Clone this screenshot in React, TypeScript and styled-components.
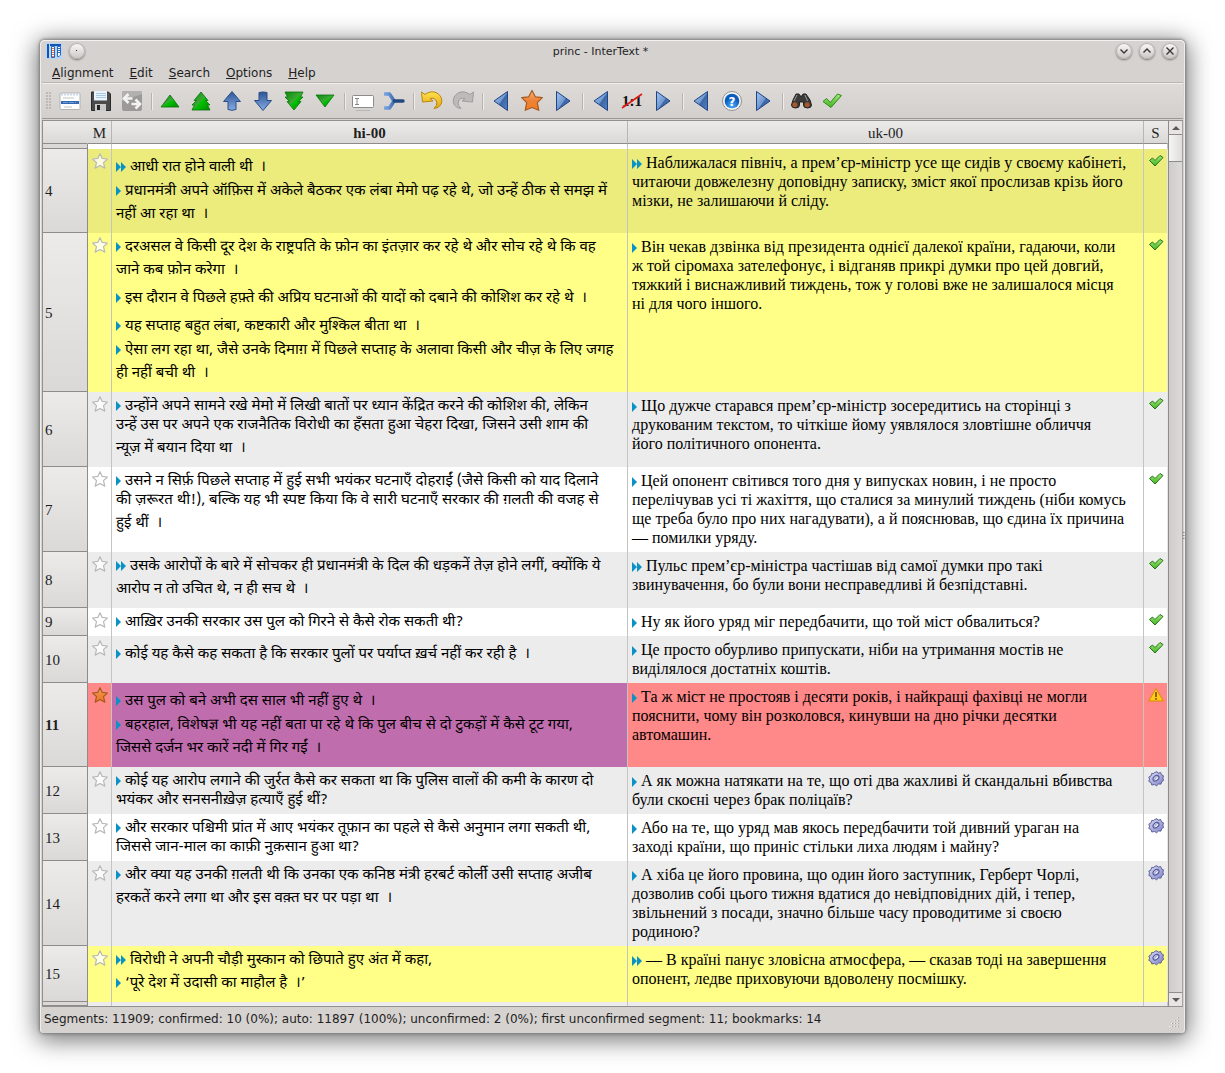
import React from "react";
import styled, { createGlobalStyle } from "styled-components";

const UI = `"DejaVu Sans", sans-serif`;
const SERIF = `"Liberation Serif", "Noto Serif", serif`;
const HINDI = `"Noto Sans Devanagari", "Lohit Devanagari", "Noto Sans", sans-serif`;

const GlobalStyle = createGlobalStyle`
  * { box-sizing: border-box; }
  body { margin: 0; background: #fff; color: #221e1e; font-family: ${UI}; }
  button { font: inherit; color: inherit; border: 0; background: none; padding: 0; margin: 0; }
`;

const Desktop = styled.div`
  padding: 40px;
`;

const Window = styled.main`
  position: relative;
  display: flex;
  flex-direction: column;
  padding: 0 2px;
  border-radius: 5px 5px 4px 4px;
  background: #d6d2d0;
  box-shadow: inset 0 1px 0 #f4f2f1, inset 1px 0 0 #efedec, inset -1px 0 0 #efedec, 0 0 3px 1px #7c7c7c,
    0 4px 24px 3px rgba(0, 0, 0, 0.55);
`;

const TitleBar = styled.header`
  display: flex;
  align-items: center;
  height: 22px;
  padding: 0 5px 0 4px;
`;

const TitleGroup = styled.div`
  display: flex;
  align-items: center;
  gap: 7px;
`;

const Title = styled.h1`
  flex: 1;
  margin: 0;
  text-align: center;
  font-size: 11px;
  font-weight: 400;
`;

const RoundButton = styled.button`
  display: grid;
  place-items: center;
  width: 16px;
  height: 16px;
  border-radius: 50%;
  background: linear-gradient(#fbfafa, #c9c6c3);
  box-shadow: inset 0 0 0 1px #b4b1ae, 0 1px 2px #77736f;
`;

const MenuBar = styled.nav`
  display: flex;
  height: 21px;
  padding: 1px 2px 0;
  font-size: 12px;
  border-bottom: 1px solid #b9b5b2;
`;

const MenuItem = styled.button`
  padding: 0 8px;
`;

const ToolBar = styled.div`
  display: flex;
  align-items: center;
  height: 36px;
  padding: 0 4px;
  border-top: 1px solid #f1efee;
  border-bottom: 1px solid #9b9896;
  background: linear-gradient(#dedad8, #d3cfcd);
`;

const Handle = styled.div`
  width: 6px;
  height: 18px;
  margin-right: 2px;
  background-image: radial-gradient(circle at 1px 1px, #bdb9b6 1px, transparent 1px);
  background-size: 3px 3px;
`;

const ToolButton = styled.button`
  display: grid;
  place-items: center;
  width: 31px;
  height: 30px;
`;

const Separator = styled.div`
  width: 2px;
  height: 17px;
  margin: 0 1px 0 4px;
  border-left: 1px solid #b6b2af;
  border-right: 1px solid #efedec;
`;

const Editor = styled.section`
  display: flex;
  margin-top: 1px;
  border-top: 1px solid #92908e;
  border-left: 1px solid #92908e;
  border-bottom: 1px solid #92908e;
`;

const GridWrap = styled.div`
  flex: 1;
  min-width: 0;
`;

const Grid = styled.table`
  width: 100%;
  table-layout: fixed;
  border-collapse: separate;
  border-spacing: 0;
  font-family: ${SERIF};
  font-size: 16px;
  line-height: 19px;
  color: #000;
`;

const Col = styled.col<{ $w?: number }>`
  width: ${(p) => (p.$w ? `${p.$w}px` : "auto")};
`;

const HeadCell = styled.th<{ $bold?: boolean; $line?: boolean }>`
  height: 23px;
  padding: 2px 0 0;
  font-size: 15px;
  font-weight: ${(p) => (p.$bold ? 700 : 400)};
  color: #221e1e;
  background: linear-gradient(#ecebea, #dad9d7);
  border-bottom: 1px solid #8e8c8a;
  border-right: 1px solid ${(p) => (p.$line === false ? "transparent" : "#b8b6b4")};
`;

const Row = styled.tr<{ $bg: string }>`
  background: ${(p) => p.$bg};
`;

const RowHead = styled.th<{ $bold?: boolean }>`
  padding: 2px 0 0 2px;
  text-align: left;
  vertical-align: middle;
  font-size: 15px;
  font-weight: ${(p) => (p.$bold ? 700 : 400)};
  color: #221e1e;
  background: linear-gradient(#ecebea, #dad9d7);
  border-right: 1px solid #8e8c8a;
  border-bottom: 1px solid #8e8c8a;
`;

const IconCell = styled.td<{ $last?: boolean }>`
  padding: 4px 3px 0 4px;
  vertical-align: top;
  border-right: 1px solid ${(p) => (p.$last ? "#e6e6e6" : "#c4c4c4")};
  svg { display: block; }
`;

const TextCell = styled.td<{ $selected?: boolean; $hindi?: boolean }>`
  padding: ${(p) => (p.$hindi ? "5px 0 4px 4px" : "4px 0 5px 4px")};
  vertical-align: top;
  font-family: ${(p) => (p.$hindi ? HINDI : SERIF)};
  font-size: ${(p) => (p.$hindi ? 15 : 16)}px;
  background: ${(p) => (p.$selected ? "#c06dae" : "transparent")};
  border-right: 1px solid #c4c4c4;
`;

const EdgeCell = styled.td<{ $h: number }>`
  height: ${(p) => p.$h}px;
  padding: 0;
  border-right: 1px solid #c4c4c4;
`;

const EdgeHead = styled.th`
  padding: 0;
  background: #dad9d7;
  border-right: 1px solid #8e8c8a;
  border-bottom: 1px solid #8e8c8a;
`;

const Line = styled.span<{ $tall?: boolean }>`
  display: block;
  height: ${(p) => (p.$tall ? 28 : 19)}px;
  line-height: ${(p) => (p.$tall ? 28 : 19)}px;
  white-space: pre;
`;

const Mark = styled.svg`
  margin-right: 4px;
  vertical-align: -1px;
`;

const ScrollBar = styled.div`
  display: flex;
  flex-direction: column;
  width: 15px;
  border-left: 1px solid #8e8c8a;
  border-right: 1px solid #a5a3a1;
  background: linear-gradient(90deg, #cfcdcb, #dcdad9);
`;

const ScrollButton = styled.button`
  display: grid;
  place-items: center;
  height: 13px;
  background: #e6e5e3;
`;

const Thumb = styled.div`
  height: 28px;
  border-top: 1px solid #8e8c8a;
  border-bottom: 1px solid #8e8c8a;
  background: linear-gradient(90deg, #f6f5f5, #dfdddc);
`;

const Track = styled.div`
  flex: 1;
  border-bottom: 1px solid #8e8c8a;
`;

const StatusBar = styled.footer`
  display: flex;
  justify-content: space-between;
  align-items: flex-start;
  height: 26px;
  padding: 4px 3px 0 2px;
  font-size: 12px;
  line-height: 16px;
`;

const Grip = styled.svg`
  align-self: flex-end;
  margin-bottom: 5px;
`;

const SideDots = styled.svg`
  position: absolute;
  right: 0;
  top: 492px;
`;

const HiddenDefs = styled.svg`
  position: absolute;
`;

const Defs = () => (
  <HiddenDefs width="0" height="0" aria-hidden="true">
    <defs>
      <linearGradient id="green" x1="0" x2="1" y1="0" y2="1">
        <stop offset="0" stopColor="#0b8a0b" />
        <stop offset=".5" stopColor="#3cab35" />
        <stop offset=".52" stopColor="#00c400" />
        <stop offset="1" stopColor="#008a00" />
      </linearGradient>
      <linearGradient id="blueV" x1="0" x2="0" y1="0" y2="1">
        <stop offset="0" stopColor="#2d5596" />
        <stop offset="1" stopColor="#86ace4" />
      </linearGradient>
      <linearGradient id="blueH" x1="0" x2="1" y1="0" y2="1">
        <stop offset="0" stopColor="#a9c6f0" />
        <stop offset=".5" stopColor="#7099d0" />
        <stop offset=".55" stopColor="#3d66a5" />
        <stop offset="1" stopColor="#5583c4" />
      </linearGradient>
      <linearGradient id="merge" x1="0" x2="1">
        <stop offset="0" stopColor="#7ba6e2" />
        <stop offset=".55" stopColor="#5f8dcf" />
        <stop offset="1" stopColor="#3a68ad" />
      </linearGradient>
      <linearGradient id="gold" x1="0" x2="0" y1="0" y2="1">
        <stop offset="0" stopColor="#ffe34d" />
        <stop offset="1" stopColor="#e5a213" />
      </linearGradient>
      <linearGradient id="orange" x1="0" x2="0" y1="0" y2="1">
        <stop offset="0" stopColor="#f7b277" />
        <stop offset=".5" stopColor="#ee8338" />
        <stop offset="1" stopColor="#ef7c22" />
      </linearGradient>
      <linearGradient id="check" x1="0" x2="0" y1="0" y2="1">
        <stop offset="0" stopColor="#a5e77e" />
        <stop offset="1" stopColor="#3db51d" />
      </linearGradient>
      <linearGradient id="gear" x1="0" x2="1" y1="0" y2="1">
        <stop offset="0" stopColor="#d9dcf7" />
        <stop offset="1" stopColor="#7c80c4" />
      </linearGradient>
      <radialGradient id="help" cx=".5" cy=".8">
        <stop offset="0" stopColor="#4fb0ff" />
        <stop offset="1" stopColor="#0a5bbd" />
      </radialGradient>
    </defs>
  </HiddenDefs>
);

const STAR = "M8 .7 10.200 5.400l5.200.6-3.900 3.600 1.300 5.500L8 12.500l-4.800 2.600 1.300-5.500L.600 6l5.200-.6Z";
const TOOL = { width: 24, height: 24, viewBox: "0 0 24 24", "aria-hidden": true } as const;

const icons: Record<string, React.ReactNode> = {
  lines: (
    <svg {...TOOL}>
      <rect x="2" y="4" width="20" height="16.500" rx="1" fill="#fdfdfd" stroke="#b4b4b4" />
      <path d="M3 5.500h18" stroke="#c9d8ea" strokeWidth="2" strokeDasharray="2 1" />
      <path d="M5 9h11M6 18h8" stroke="#c4c4c4" />
      <path d="M3 13.500h18" stroke="#3468b0" strokeWidth="3" />
      <path d="M5 13.500h13" stroke="#6d9bd6" strokeDasharray="5 1" />
    </svg>
  ),
  save: (
    <svg {...TOOL}>
      <path d="M2.500 3h17l2 2v16.500h-19Z" fill="#4a4a4a" stroke="#2b2b2b" />
      <rect x="5" y="2" width="13" height="9.500" fill="#eaf3fb" />
      <path d="M7 4.500h10M7 6.500h10M7 8.500h10" stroke="#a9c8e4" />
      <rect x="6" y="15" width="11" height="7" fill="#c9c9c9" />
      <rect x="8" y="16" width="3" height="5" fill="#222" />
    </svg>
  ),
  swap: (
    <svg {...TOOL}>
      <rect x="2" y="2" width="20" height="20" rx="2" fill="#9b9a98" />
      <path d="M2 12 22 5v-1q0-2-2-2H4Q2 2 2 4Z" fill="#b3b1af" />
      <path
        d="m8.500 5-4.500 4.500L8.500 14M4.500 9.500h8M15.500 10.500 20 15l-4.500 4.500M19.500 15h-8"
        fill="none"
        stroke="#f3f2f1"
        strokeWidth="2.600"
      />
    </svg>
  ),
  up: (
    <svg {...TOOL}>
      <path d="M12 6 21 18H3Z" fill="url(#green)" stroke="#0b700b" strokeWidth=".8" />
    </svg>
  ),
  upUp: (
    <svg {...TOOL}>
      <path d="m12 3 7 8.500h-2.500L21 16h-2.500l2.500 5H3l2.500-5H3l4.500-4.500H5Z" fill="url(#green)" stroke="#0b700b" strokeWidth=".8" />
    </svg>
  ),
  arrowUp: (
    <svg {...TOOL}>
      <path d="m12 2.500 8.500 10H16v8q-4 1.500-8 0v-8H3.500Z" fill="url(#blueV)" stroke="#2a4c86" />
    </svg>
  ),
  arrowDown: (
    <svg {...TOOL}>
      <path d="m12 21.500 8.500-10H16v-8q-4-1-8 0v8H3.500Z" fill="url(#blueV)" stroke="#2a4c86" />
    </svg>
  ),
  downDown: (
    <svg {...TOOL}>
      <path d="m12 21 7-8.500h-2.500L21 8h-2.500L21 3H3l2.500 5H3l4.500 4.500H5Z" fill="url(#green)" stroke="#0b700b" strokeWidth=".8" />
    </svg>
  ),
  down: (
    <svg {...TOOL}>
      <path d="M12 18 21 6H3Z" fill="url(#green)" stroke="#0b700b" strokeWidth=".8" />
    </svg>
  ),
  edit: (
    <svg {...TOOL}>
      <rect x="1.500" y="6.500" width="21" height="12" rx="1" fill="#fff" stroke="#8b8b8b" />
      <path d="M4 9.500h4M4 15.500h4M6 9.500v6" stroke="#888" fill="none" />
      <path d="M5 21.500h14" stroke="#bab6b3" />
    </svg>
  ),
  merge: (
    <svg {...TOOL}>
      <path d="M2 5h5.500L12 12l-4.500 7H2" fill="none" stroke="url(#merge)" strokeWidth="3.400" strokeLinejoin="round" />
      <path d="M12.500 12H21" stroke="#22497f" strokeWidth="3.400" strokeLinecap="round" />
    </svg>
  ),
  undo: (
    <svg {...TOOL}>
      <path
        d="M1.500 3 5 5.500q6-4.500 12-1.500 6 4 4.500 10-1.800 5-7.500 5.500 3.500-3 2.800-6.500Q15 8 10 9.500l3 2.500-10.500 1Z"
        fill="url(#gold)"
        stroke="#b88710"
      />
    </svg>
  ),
  redo: (
    <svg {...TOOL}>
      <path
        d="M22.500 3 19 5.500Q13 1 7 4 1 8 2.500 14q1.800 5 7.500 5.500-3.500-3-2.800-6.500Q9 8 14 9.500L11 12l10.500 1Z"
        fill="#bdbbb9"
        stroke="#a09e9c"
      />
    </svg>
  ),
  prev: (
    <svg {...TOOL}>
      <path d="M18.500 2.500v19L5 12Z" fill="url(#blueH)" stroke="#1d4484" />
    </svg>
  ),
  next: (
    <svg {...TOOL}>
      <path d="M5.500 2.500v19L19 12Z" fill="url(#blueH)" stroke="#1d4484" />
    </svg>
  ),
  star: (
    <svg {...TOOL}>
      <path
        d="m12 1.500 3.300 6.300 7 .9-5 5 1.500 7.600L12 18.500l-6.800 2.800 1.500-7.600-5-5 7-.9Z"
        fill="url(#orange)"
        stroke="#a65a1e"
        strokeWidth="1.200"
        strokeLinejoin="round"
      />
    </svg>
  ),
  ratio: (
    <svg {...TOOL}>
      <text x="12" y="17" textAnchor="middle" fontFamily="Liberation Serif" fontWeight="700" fontSize="15" fill="#111">
        1:1
      </text>
      <path d="m2 19 20-14" stroke="#e01b1b" strokeWidth="1.600" />
    </svg>
  ),
  help: (
    <svg {...TOOL}>
      <circle cx="12" cy="12" r="9.500" fill="#f3f3f3" stroke="#929292" />
      <circle cx="12" cy="12" r="7.300" fill="url(#help)" />
      <text x="12" y="16.500" textAnchor="middle" fontFamily="DejaVu Sans" fontWeight="700" fontSize="12" fill="#fff">
        ?
      </text>
    </svg>
  ),
  find: (
    <svg {...TOOL}>
      <path d="M7 5h3l1 2h2l1-2h3l4 6 1.500 5q0 3-4 3t-4-3v-3h-4v3q0 3-4 3t-4-3L4 11Z" fill="#3c3a39" stroke="#222" />
      <path d="M8 6 5 12M16 6l2.500 6" stroke="#999" />
      <circle cx="5.800" cy="15.700" r="2.500" fill="#a6572b" />
      <circle cx="18.200" cy="15.700" r="2.500" fill="#a6572b" />
    </svg>
  ),
  check: (
    <svg {...TOOL}>
      <path d="M3 12.500 6.500 9.500l3.800 4L17.500 5l4 1.500L11 18.500Z" fill="url(#check)" stroke="#2d8a15" strokeLinejoin="round" />
    </svg>
  ),
};

const groups: [string, string][][] = [
  [["lines", "Edit text"], ["save", "Save"], ["swap", "Swap versions"]],
  [
    ["up", "Move up"],
    ["upUp", "Move all up"],
    ["arrowUp", "Shift up"],
    ["arrowDown", "Shift down"],
    ["downDown", "Move all down"],
    ["down", "Move down"],
  ],
  [["edit", "Edit element"], ["merge", "Merge"]],
  [["undo", "Undo"], ["redo", "Redo"]],
  [["prev", "Previous bookmark"], ["star", "Toggle bookmark"], ["next", "Next bookmark"]],
  [["prev", "Previous non 1:1"], ["ratio", "Non 1:1 segments"], ["next", "Next non 1:1"]],
  [["prev", "Previous unconfirmed"], ["help", "Unconfirmed segments"], ["next", "Next unconfirmed"]],
  [["find", "Find"], ["check", "Confirm"]],
];

const Bookmark = ({ on }: { on?: boolean }) => (
  <svg width="16" height="16" viewBox="0 0 16 16" role="img" aria-label={on ? "bookmarked" : "not bookmarked"}>
    <path
      d={STAR}
      fill={on ? "url(#orange)" : "rgba(255,255,255,.75)"}
      stroke={on ? "#a65a1e" : "#b9b9b9"}
      strokeWidth="1.200"
      strokeLinejoin="round"
    />
  </svg>
);

type State = "ok" | "warn" | "auto";

const Status = ({ state }: { state: State }) => (
  <svg width="16" height="16" viewBox="0 0 16 16" role="img" aria-label={state}>
    {state === "ok" && (
      <path d="M1.500 7.500 4.500 5l2.500 2.500L12 2.500l3 2L7 13Z" fill="url(#check)" stroke="#23741a" strokeLinejoin="round" />
    )}
    {state === "warn" && (
      <>
        <path d="M8 1.500 15.300 14H.700Z" fill="#ffcb1a" stroke="#d98c00" strokeLinejoin="round" />
        <path d="M8 5v5M8 11v1.700" stroke="#7a4a00" strokeWidth="1.600" />
      </>
    )}
    {state === "auto" && (
      <>
        <path
          d="M6.500 1.500 9 .700l1 1.500 2.700-.7.800 2.300 2 1-.6 2.400.7 2.300-1.900 1.200-.7 2.400-2.500-.1-2 1.800-2-1.300-2.700.5-.7-2.300-2.300-1.300.8-2.300L.800 6 3 4.900l.7-2.500 2.100.1Z"
          fill="url(#gear)"
          stroke="#55588f"
          strokeWidth=".9"
        />
        <ellipse cx="8" cy="7.200" rx="3.300" ry="2.300" transform="rotate(-40 8 7.200)" fill="#e4e5f4" stroke="#4d5090" />
        <path d="M6.500 8.800q.5-3 3.500-3.500" stroke="#8f93c9" fill="none" />
      </>
    )}
  </svg>
);

const Marker = ({ double }: { double: boolean }) => (
  <Mark width={double ? 10 : 5} height="10" viewBox={double ? "0 0 10 10" : "0 0 5 10"} aria-hidden="true">
    <path d={double ? "M0 0 5 5 0 10ZM5 0l5 5-5 5Z" : "M0 0 5 5 0 10Z"} fill="#0a91c6" />
  </Mark>
);

/* "»" opens a paragraph, "›" opens a sentence; lines closed by a danda are taller. */
const Lines = ({ text }: { text: string[] }) => (
  <>
    {text.map((line) => {
      const marked = line[0] === "»" || line[0] === "›";
      return (
        <Line key={line} $tall={line.includes("।")}>
          {marked && <Marker double={line[0] === "»"} />}
          {marked ? line.slice(1) : line}
        </Line>
      );
    })}
  </>
);

interface Segment {
  n: number;
  bg: string;
  state: State;
  hi: string[];
  uk: string[];
}

const GRAY = "#ececec";
const YELLOW = "#ffff88";

const segments: Segment[] = [
  {
    n: 4, bg: "#ecec7c", state: "ok",
    hi: ["»आधी रात होने वाली थी  ।", "›प्रधानमंत्री अपने ऑफ़िस में अकेले बैठकर एक लंबा मेमो पढ़ रहे थे, जो उन्हें ठीक से समझ में", "नहीं आ रहा था  ।"],
    uk: ["»Наближалася північ, а прем’єр-міністр усе ще сидів у своєму кабінеті,", "читаючи довжелезну доповідну записку, зміст якої прослизав крізь його", "мізки, не залишаючи й сліду."],
  },
  {
    n: 5, bg: YELLOW, state: "ok",
    hi: [
      "›दरअसल वे किसी दूर देश के राष्ट्रपति के फ़ोन का इंतज़ार कर रहे थे और सोच रहे थे कि वह",
      "जाने कब फ़ोन करेगा  ।",
      "›इस दौरान वे पिछले हफ़्ते की अप्रिय घटनाओं की यादों को दबाने की कोशिश कर रहे थे  ।",
      "›यह सप्ताह बहुत लंबा, कष्टकारी और मुश्किल बीता था  ।",
      "›ऐसा लग रहा था, जैसे उनके दिमाग़ में पिछले सप्ताह के अलावा किसी और चीज़ के लिए जगह",
      "ही नहीं बची थी  ।",
    ],
    uk: ["›Він чекав дзвінка від президента однієї далекої країни, гадаючи, коли", "ж той сіромаха зателефонує, і відганяв прикрі думки про цей довгий,", "тяжкий і виснажливий тиждень, тож у голові вже не залишалося місця", "ні для чого іншого."],
  },
  {
    n: 6, bg: GRAY, state: "ok",
    hi: ["›उन्होंने अपने सामने रखे मेमो में लिखी बातों पर ध्यान केंद्रित करने की कोशिश की, लेकिन", "उन्हें उस पर अपने एक राजनैतिक विरोधी का हँसता हुआ चेहरा दिखा, जिसने उसी शाम की", "न्यूज़ में बयान दिया था  ।"],
    uk: ["›Що дужче старався прем’єр-міністр зосередитись на сторінці з", "друкованим текстом, то чіткіше йому уявлялося зловтішне обличчя", "його політичного опонента."],
  },
  {
    n: 7, bg: "#ffffff", state: "ok",
    hi: ["›उसने न सिर्फ़ पिछले सप्ताह में हुई सभी भयंकर घटनाएँ दोहराईं (जैसे किसी को याद दिलाने", "की ज़रूरत थी!), बल्कि यह भी स्पष्ट किया कि वे सारी घटनाएँ सरकार की ग़लती की वजह से", "हुई थीं  ।"],
    uk: ["›Цей опонент світився того дня у випусках новин, і не просто", "перелічував усі ті жахіття, що сталися за минулий тиждень (ніби комусь", "ще треба було про них нагадувати), а й пояснював, що єдина їх причина", "— помилки уряду."],
  },
  {
    n: 8, bg: GRAY, state: "ok",
    hi: ["»उसके आरोपों के बारे में सोचकर ही प्रधानमंत्री के दिल की धड़कनें तेज़ होने लगीं, क्योंकि ये", "आरोप न तो उचित थे, न ही सच थे  ।"],
    uk: ["»Пульс прем’єр-міністра частішав від самої думки про такі", "звинувачення, бо були вони несправедливі й безпідставні."],
  },
  {
    n: 9, bg: "#ffffff", state: "ok",
    hi: ["›आख़िर उनकी सरकार उस पुल को गिरने से कैसे रोक सकती थी?"],
    uk: ["›Ну як його уряд міг передбачити, що той міст обвалиться?"],
  },
  {
    n: 10, bg: GRAY, state: "ok",
    hi: ["›कोई यह कैसे कह सकता है कि सरकार पुलों पर पर्याप्त ख़र्च नहीं कर रही है  ।"],
    uk: ["›Це просто обурливо припускати, ніби на утримання мостів не", "виділялося достатніх коштів."],
  },
  {
    n: 11, bg: "#ff8888", state: "warn",
    hi: ["›उस पुल को बने अभी दस साल भी नहीं हुए थे  ।", "›बहरहाल, विशेषज्ञ भी यह नहीं बता पा रहे थे कि पुल बीच से दो टुकड़ों में कैसे टूट गया,", "जिससे दर्जन भर कारें नदी में गिर गईं  ।"],
    uk: ["›Та ж міст не простояв і десяти років, і найкращі фахівці не могли", "пояснити, чому він розколовся, кинувши на дно річки десятки", "автомашин."],
  },
  {
    n: 12, bg: GRAY, state: "auto",
    hi: ["›कोई यह आरोप लगाने की जुर्रत कैसे कर सकता था कि पुलिस वालों की कमी के कारण दो", "भयंकर और सनसनीख़ेज़ हत्याएँ हुई थीं?"],
    uk: ["›А як можна натякати на те, що оті два жахливі й скандальні вбивства", "були скоєні через брак поліцаїв?"],
  },
  {
    n: 13, bg: "#ffffff", state: "auto",
    hi: ["›और सरकार पश्चिमी प्रांत में आए भयंकर तूफ़ान का पहले से कैसे अनुमान लगा सकती थी,", "जिससे जान-माल का काफ़ी नुक़सान हुआ था?"],
    uk: ["›Або на те, що уряд мав якось передбачити той дивний ураган на", "заході країни, що приніс стільки лиха людям і майну?"],
  },
  {
    n: 14, bg: GRAY, state: "auto",
    hi: ["›और क्या यह उनकी ग़लती थी कि उनका एक कनिष्ठ मंत्री हरबर्ट कोर्ली उसी सप्ताह अजीब", "हरकतें करने लगा था और इस वक़्त घर पर पड़ा था  ।"],
    uk: ["›А хіба це його провина, що один його заступник, Герберт Чорлі,", "дозволив собі цього тижня вдатися до невідповідних дій, і тепер,", "звільнений з посади, значно більше часу проводитиме зі своєю", "родиною?"],
  },
  {
    n: 15, bg: YELLOW, state: "auto",
    hi: ["»विरोधी ने अपनी चौड़ी मुस्कान को छिपाते हुए अंत में कहा,", "›‘पूरे देश में उदासी का माहौल है  ।’"],
    uk: ["»— В країні панує зловісна атмосфера, — сказав тоді на завершення", "опонент, ледве приховуючи вдоволену посмішку."],
  },
];

const menus = ["Alignment", "Edit", "Search", "Options", "Help"];

const EdgeRow = ({ height, bg }: { height: number; bg: string }) => (
  <Row $bg={bg}>
    <EdgeHead />
    <EdgeCell $h={height} />
    <EdgeCell $h={height} />
    <EdgeCell $h={height} />
    <EdgeCell $h={height} />
  </Row>
);

const Chevron = ({ d }: { d: string }) => (
  <svg width="10" height="10" viewBox="0 0 10 10" aria-hidden="true">
    <path d={d} fill="none" stroke="#3a3634" strokeWidth="1.400" />
  </svg>
);

export default function App() {
  return (
    <Desktop>
      <GlobalStyle />
      <Defs />
      <Window>
        <TitleBar>
          <TitleGroup>
            <svg width="16" height="16" viewBox="0 0 16 16" aria-hidden="true">
              <rect width="16" height="16" fill="#b4d6fa" />
              <path d="M1 1h2v14H1ZM4 1h11v2H4Z" fill="#1355b0" />
              <path d="M5.500 3.500h3v11h-3ZM11.500 3.500h3V12l-1.500 1.500h-1.500Z" fill="#fff" stroke="#2a66bd" />
              <path d="M7 5v9" stroke="#f0714a" strokeWidth="2" strokeDasharray="1 1" />
              <path d="M13 5v6" stroke="#2a66bd" strokeWidth="2" strokeDasharray="1 1" />
            </svg>
            <RoundButton aria-label="Window menu">
              <svg width="2" height="2" aria-hidden="true"><rect width="1" height="1" fill="#2a2624" /></svg>
            </RoundButton>
          </TitleGroup>
          <Title>princ - InterText *</Title>
          <TitleGroup>
            <RoundButton aria-label="Minimize"><Chevron d="m1.500 3.500 3.500 3.500 3.500-3.500" /></RoundButton>
            <RoundButton aria-label="Maximize"><Chevron d="M1.500 6.500 5 3l3.500 3.500" /></RoundButton>
            <RoundButton aria-label="Close"><Chevron d="m1.500 1.500 7 7m0-7-7 7" /></RoundButton>
          </TitleGroup>
        </TitleBar>
        <MenuBar>
          {menus.map((m) => (
            <MenuItem key={m}>
              <u>{m[0]}</u>
              {m.slice(1)}
            </MenuItem>
          ))}
        </MenuBar>
        <ToolBar role="toolbar">
          <Handle />
          {groups.map((group, i) => (
            <React.Fragment key={i}>
              {i > 0 && <Separator />}
              {group.map(([icon, label]) => (
                <ToolButton key={label} aria-label={label}>
                  {icons[icon]}
                </ToolButton>
              ))}
            </React.Fragment>
          ))}
        </ToolBar>
        <Editor>
          <GridWrap>
            <Grid>
              <colgroup>
                <Col $w={45} />
                <Col $w={24} />
                <Col />
                <Col />
                <Col $w={24} />
              </colgroup>
              <thead>
                <tr>
                  <HeadCell $line={false} />
                  <HeadCell>M</HeadCell>
                  <HeadCell $bold>hi-00</HeadCell>
                  <HeadCell>uk-00</HeadCell>
                  <HeadCell $line={false}>S</HeadCell>
                </tr>
              </thead>
              <tbody>
                <EdgeRow height={5} bg="#ffffff" />
                {segments.map((s) => (
                  <Row key={s.n} $bg={s.bg}>
                    <RowHead scope="row" $bold={s.n === 11}>{s.n}</RowHead>
                    <IconCell><Bookmark on={s.n === 11} /></IconCell>
                    <TextCell lang="hi" $hindi $selected={s.n === 11}><Lines text={s.hi} /></TextCell>
                    <TextCell lang="uk"><Lines text={s.uk} /></TextCell>
                    <IconCell $last><Status state={s.state} /></IconCell>
                  </Row>
                ))}
                <EdgeRow height={4} bg={GRAY} />
              </tbody>
            </Grid>
          </GridWrap>
          <ScrollBar>
            <ScrollButton aria-label="Scroll up">
              <svg width="8" height="4" aria-hidden="true"><path d="M4 0 8 4H0Z" fill="#5c5957" /></svg>
            </ScrollButton>
            <Thumb />
            <Track />
            <ScrollButton aria-label="Scroll down">
              <svg width="8" height="4" aria-hidden="true"><path d="M4 4 8 0H0Z" fill="#5c5957" /></svg>
            </ScrollButton>
          </ScrollBar>
        </Editor>
        <StatusBar>
          <span>Segments: 11909; confirmed: 10 (0%); auto: 11897 (100%); unconfirmed: 2 (0%); first unconfirmed segment: 11; bookmarks: 14</span>
          <Grip width="11" height="11" viewBox="0 0 11 11" aria-hidden="true">
            <path d="M9 0v11M6 3v8M3 6v5M0 9v2" stroke="#f1efee" strokeWidth="2" strokeDasharray="1 2" />
            <path d="M9.500 0v11M6.500 3v8M3.500 6v5" stroke="#a5a19e" strokeDasharray="1 2" />
          </Grip>
        </StatusBar>
        <SideDots width="3" height="9" aria-hidden="true">
          <path d="M1.500 0v9" stroke="#8e8b89" strokeWidth="2" strokeDasharray="1 2" />
        </SideDots>
      </Window>
    </Desktop>
  );
}
